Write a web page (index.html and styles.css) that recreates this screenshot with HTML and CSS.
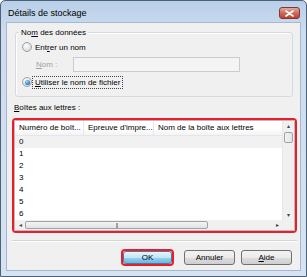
FILE: index.html
```html
<!DOCTYPE html>
<html lang="fr">
<head>
    <meta charset="UTF-8">
    <title>Détails de stockage</title>
    <link rel="stylesheet" href="styles.css">
</head>
<body>

<div class="window">
    <div class="titlebar">
        <span class="title">Détails de stockage</span>
        <span class="close">
            <svg width="9" height="7" viewBox="0 0 9 7">
                <path d="M1 1 L8 6 M8 1 L1 6" stroke="#fff" stroke-width="1.6" stroke-linecap="round"/>
            </svg>
        </span>
    </div>

    <div class="client">
        <div class="group">
            <span class="legend">No<u>m</u> des données</span>
            <div class="row first">
                <span class="radio"></span>
                <span class="text">Ent<u>r</u>er un nom</span>
            </div>
            <div class="row name-row">
                <span class="text disabled"><u>N</u>om :</span>
                <span class="edit"></span>
            </div>
            <div class="row last">
                <span class="radio checked"></span>
                <span class="text focus"><u>U</u>tiliser le nom de fichier</span>
            </div>
        </div>

        <div class="caption"><u>B</u>oîtes aux lettres :</div>

        <div class="mark list-mark">
            <div class="listview">
                <div class="view">
                    <div class="header">
                        <span class="col c1">Numéro de boît...</span>
                        <span class="col c2">Epreuve d'impre...</span>
                        <span class="col c3">Nom de la boîte aux lettres</span>
                    </div>
                    <div class="item hot">0</div>
                    <div class="item">1</div>
                    <div class="item">2</div>
                    <div class="item">3</div>
                    <div class="item">4</div>
                    <div class="item">5</div>
                    <div class="item">6</div>
                </div>
                <div class="vscroll">
                    <span class="arrow">&#9652;</span>
                    <span class="vthumb"></span>
                    <span class="vtrack"></span>
                    <span class="arrow">&#9662;</span>
                </div>
                <div class="hscroll">
                    <span class="arrow">&#9666;</span>
                    <span class="hthumb">|||</span>
                    <span class="htrack"></span>
                    <span class="arrow">&#9656;</span>
                </div>
                <div class="corner"></div>
            </div>
        </div>

        <div class="separator"></div>

        <div class="buttons">
            <span class="mark ok-mark"><span class="button default">OK</span></span>
            <span class="button">Annuler</span>
            <span class="button"><u>A</u>ide</span>
        </div>
    </div>
</div>

</body>
</html>
```

FILE: styles.css
```css
body {
    margin: 0;
    padding: 0;
    background-color: #fff;
    font-family: "Liberation Sans", Arial, sans-serif;
    font-size: 8px;
    color: #000;
}

.window {
    width: 307px;
    height: 277px;
    box-sizing: border-box;
    border: 1px solid #4f6175;
    border-radius: 5px 5px 0 0;
    background: linear-gradient(#b8cfe9, #cddcee 30px, #d6e3f2);
    display: flex;
    flex-direction: column;
}

.titlebar {
    height: 21px;
    display: flex;
    align-items: flex-start;
    padding: 0 6px 0 7px;
}

.title {
    font-size: 9px;
    margin-top: 7px;
    color: #000;
}

.close {
    margin-left: auto;
    margin-top: 6px;
    width: 19px;
    height: 10px;
    border: 1px solid #7a3a33;
    border-radius: 3px;
    background: linear-gradient(#e4a79d, #cf6b5c 50%, #c0402f);
    display: flex;
    align-items: center;
    justify-content: center;
}

.client {
    margin: 0 5px 0 5px;
    height: 249px;
    box-sizing: border-box;
    border: 1px solid #a6b8cc;
    background-color: #f0f0f0;
    display: flex;
    flex-direction: column;
}

u {
    text-decoration: underline;
    text-underline-offset: 1px;
}

.group {
    margin: 9px 0 0 8px;
    width: 278px;
    height: 65px;
    box-sizing: border-box;
    border: 1px solid #d3dbe2;
    border-radius: 3px;
    box-shadow: inset 1px 1px 0 #fff;
    padding-left: 6px;
    display: flex;
    flex-direction: column;
    align-items: flex-start;
}

.legend {
    margin: -6px 0 0 -3px;
    padding: 0 2px;
    height: 11px;
    line-height: 11px;
    background-color: #f0f0f0;
}

.row {
    display: flex;
    align-items: center;
    height: 10px;
}

.row.first {
    margin-top: 4px;
}

.row.name-row {
    margin-top: 5px;
    height: 15px;
}

.row.last {
    margin-top: 4px;
    height: 12px;
}

.radio {
    width: 10px;
    height: 10px;
    box-sizing: border-box;
    border: 1px solid #9aa3ab;
    border-radius: 50%;
    background: radial-gradient(circle at 40% 35%, #fff, #d9dde1 70%);
    display: flex;
    align-items: center;
    justify-content: center;
}

.radio.checked::after {
    content: "";
    width: 5px;
    height: 5px;
    border-radius: 50%;
    background: radial-gradient(circle at 40% 35%, #a9dcf7, #1b67b3 75%);
}

.text {
    margin-left: 3px;
    line-height: 11px;
}

.text.disabled {
    color: #a0a0a0;
    margin-left: 14px;
    width: 37px;
}

.text.focus {
    margin-left: 1px;
    padding: 0 2px;
    outline: 1px dotted #444;
    outline-offset: 0;
}

.edit {
    width: 167px;
    height: 15px;
    box-sizing: border-box;
    border: 1px solid #c9ccd0;
    background-color: #f4f4f4;
}

.caption {
    margin: 5px 0 0 7px;
    line-height: 11px;
    height: 11px;
}

.mark {
    border: 2px solid #ee1c24;
    border-radius: 4px;
}

.list-mark {
    margin: 5px 0 0 5px;
    width: 285px;
    height: 115px;
    box-sizing: border-box;
}

.listview {
    height: 100%;
    box-sizing: border-box;
    border: 1px solid #b5bcc5;
    background-color: #fff;
    display: grid;
    grid-template-columns: 1fr 12px;
    grid-template-rows: 1fr 10px;
}

.view {
    overflow: hidden;
}

.header {
    height: 15px;
    box-sizing: border-box;
    display: flex;
    background: linear-gradient(#fff, #fff 50%, #f3f4f6);
    border-bottom: 1px solid #e3e6ea;
}

.col {
    line-height: 14px;
    padding-left: 4px;
    border-right: 1px solid #e3e6ea;
    white-space: nowrap;
}

.c1 {
    width: 64px;
}

.c2 {
    width: 65px;
}

.c3 {
    flex: 1;
    border-right: none;
}

.item {
    height: 12px;
    line-height: 12px;
    padding-left: 4px;
}

.item.hot {
    background-color: #f1f1f1;
}

.vscroll {
    display: flex;
    flex-direction: column;
    background-color: #f0f0f0;
    border-left: 1px solid #e8e8e8;
}

.arrow {
    height: 10px;
    line-height: 10px;
    font-size: 6px;
    color: #444;
    text-align: center;
    flex: none;
}

.hscroll .arrow {
    width: 10px;
    height: 10px;
}

.vthumb {
    margin: 1px 1px 0 1px;
    height: 11px;
    box-sizing: border-box;
    border: 1px solid #9ea3a8;
    border-radius: 2px;
    background: linear-gradient(90deg, #f3f3f3, #e2e3e5);
}

.vtrack {
    flex: 1;
}

.hscroll {
    display: flex;
    background-color: #f0f0f0;
}

.hthumb {
    width: 183px;
    margin: 1px 0;
    box-sizing: border-box;
    border: 1px solid #9ea3a8;
    border-radius: 2px;
    background: linear-gradient(#f3f3f3, #e2e3e5);
    font-size: 5px;
    line-height: 6px;
    letter-spacing: -1px;
    color: #555;
    text-align: center;
}

.htrack {
    flex: 1;
}

.corner {
    background-color: #f0f0f0;
}

.separator {
    margin: 7px 0 0 5px;
    width: 285px;
    height: 1px;
    background-color: #d5d5d5;
    border-bottom: 1px solid #fff;
}

.buttons {
    margin-top: 7px;
    padding-right: 8px;
    display: flex;
    justify-content: flex-end;
    align-items: center;
}

.ok-mark {
    margin-right: 4px;
    display: flex;
}

.button {
    width: 51px;
    height: 15px;
    box-sizing: border-box;
    border: 1px solid #707070;
    border-radius: 3px;
    background: linear-gradient(#f2f2f2, #ebebeb 50%, #dddddd 51%, #cfcfcf);
    text-align: center;
    line-height: 13px;
    margin-left: 6px;
}

.button.default {
    width: 49px;
    height: 13px;
    line-height: 11px;
    margin-left: 0;
    border-color: #3c7fb1;
    background: linear-gradient(#e5f4fc, #c4e5f6 50%, #98d1ef 51%, #6db7e1);
}
```
